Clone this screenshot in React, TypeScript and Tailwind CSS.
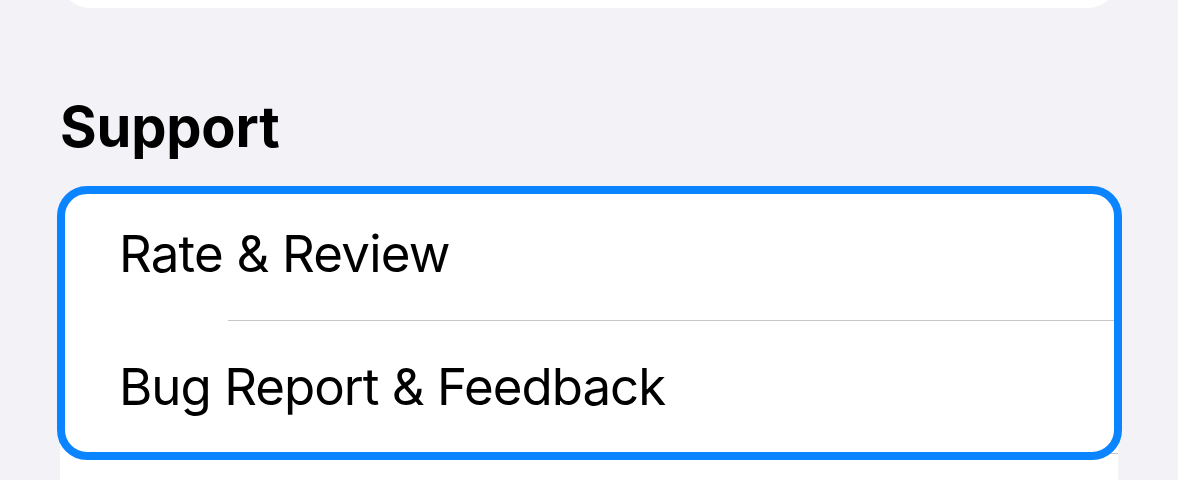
export default function App() {
  return (
    <div className="min-h-screen bg-[#f2f2f7] px-[60px] font-['Inter','Liberation_Sans',sans-serif] text-black">
      {/* tail of the group above */}
      <div className="flex h-[8px] flex-col justify-end overflow-hidden">
        <div className="h-[60px] shrink-0 rounded-b-[30px] bg-white" />
      </div>

      <h2 className="mt-[91px] text-[56px] font-bold leading-none tracking-[-0.2px]">Support</h2>

      <div className="mt-[34px] rounded-t-[26px] bg-white">
        <div className="relative">
          <div className="flex h-[131px] items-center pl-[59px] text-[51px] tracking-[-0.8px]">
            Rate &amp; Review
          </div>
          <div className="ml-[168px] h-px bg-[#c6c6c8]" />
          <div className="flex h-[132px] items-center pl-[59px] text-[51px] tracking-[-1px]">
            Bug Report &amp; Feedback
          </div>
          <div className="ml-[168px] h-px bg-[#c6c6c8]" />

          {/* keyboard focus ring */}
          <div className="pointer-events-none absolute -left-[3px] -right-[4px] -top-[3px] -bottom-[6px] rounded-[30px] border-[8px] border-[#0a84ff]" />
        </div>
        <div className="h-[132px]" />
      </div>
    </div>
  );
}
